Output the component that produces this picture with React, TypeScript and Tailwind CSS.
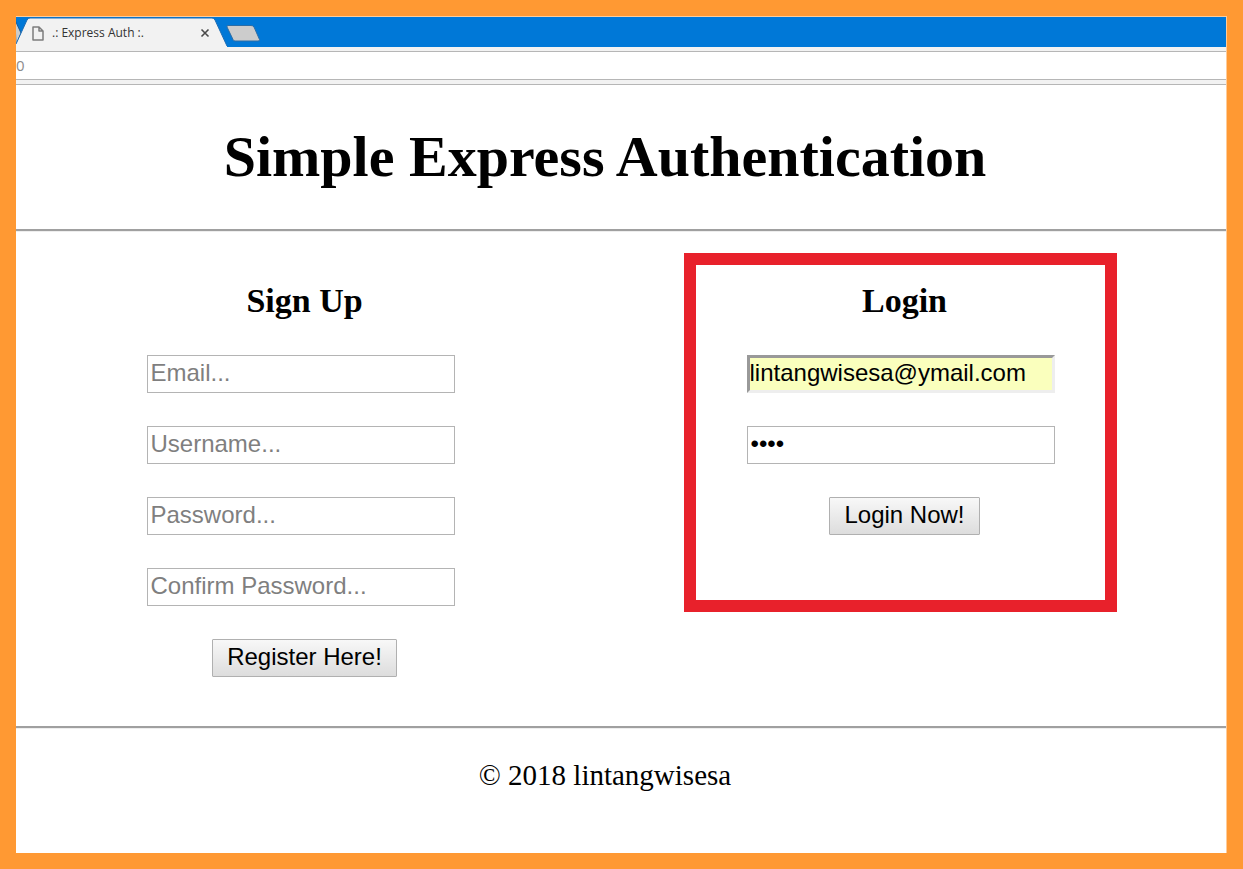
import { useState } from "react";

const serif = "font-['Liberation_Serif','Times_New_Roman',serif]";
const controlBase =
  "h-[38px] text-[24px] leading-[30px] font-['Liberation_Sans',Arial,sans-serif]";
const fieldClass = `${controlBase} w-[308px] border border-[#b4b4b4] bg-white px-[3px] pb-0.5 text-black placeholder:text-[#7f7f7f] placeholder:opacity-100 outline-none`;
const filledClass = `${controlBase} w-[308px] border-[3px] border-t-[#999999] border-l-[#999999] border-r-[#eeeeee] border-b-[#eeeeee] bg-[#faffbd] pb-0.5 text-black outline-none`;
const buttonClass = `${controlBase} self-center rounded-[1px] border border-[#b0b0b0] bg-linear-to-b from-[#f8f8f8] to-[#dddddd] px-[14px] pb-0.5 text-black`;
const panelClass =
  "flex w-[433px] flex-col border-[12px] pt-4 pr-[42px] pl-[51px]";

function Rule() {
  return (
    <hr className="h-[3px] border-0 border-t-2 border-b border-t-[#a0a0a0] border-b-[#eeeeee]" />
  );
}

function TabStrip() {
  return (
    <div className="relative flex h-[30px] items-center bg-[#0078d7]">
      <svg
        className="absolute top-0 left-0"
        width="250"
        height="30"
        viewBox="0 0 250 30"
        aria-hidden="true"
      >
        <path d="M-1 3 L5 16 L0 29 Z" fill="#cccccc" stroke="#1d5c96" />
        <path
          d="M0 30 V27 L11 3 Q12 1 14 1 H196 Q198 1 199 3 L211 29 V30 Z"
          fill="#f2f2f2"
        />
        <path
          d="M0 27 L11 3 Q12 1 14 1 H196 Q198 1 199 3 L211 29"
          fill="none"
          stroke="#1d6db5"
        />
        <path
          d="M212 8.5 H235 Q237 8.5 238 10 L243.500 22.500 Q244 24 242 24 H219 Q217.500 24 217 22.500 L211 10 Q210.500 8.500 212 8.500 Z"
          fill="#cccccc"
          stroke="#2d6da5"
        />
      </svg>
      <div className="relative flex w-[195px] items-center pt-0.5 pl-4">
        <svg width="12" height="15" viewBox="0 0 12 15" fill="none" aria-hidden="true">
          <path
            d="M1 1 H7 L11 5 V14 H1 Z M7 1 V5 H11"
            stroke="#7d7d7d"
            strokeWidth="1.500"
            strokeLinejoin="round"
          />
        </svg>
        <span className="ml-2 flex-1 font-['Open_Sans','Noto_Sans',sans-serif] text-[12px] leading-4 text-[#333333]">
          .: Express Auth :.
        </span>
        <button type="button" aria-label="Close tab" className="p-px">
          <svg width="10" height="10" viewBox="0 0 10 10" aria-hidden="true">
            <path d="M1.500 1.500 L8.500 8.500 M8.500 1.500 L1.500 8.500" stroke="#4a4a4a" strokeWidth="1.600" />
          </svg>
        </button>
      </div>
    </div>
  );
}

export default function App() {
  const [address, setAddress] = useState("0");
  const [email, setEmail] = useState("lintangwisesa@ymail.com");
  const [password, setPassword] = useState("1234");

  return (
    <div className="flex min-h-screen flex-col bg-[#ff9933] p-4">
      <div className="flex flex-1 flex-col border-t border-r border-[#ffcc99] bg-white">
        <TabStrip />
        <div className="bg-[#f2f2f2] pt-1 pb-1">
          <input
            aria-label="Address"
            value={address}
            onChange={(e) => setAddress(e.target.value)}
            className="block h-[29px] w-full border-y border-[#b6b6b6] bg-white pb-0.5 font-['Open_Sans','Noto_Sans',sans-serif] text-[15px] text-[#8c8c8c] outline-none"
          />
        </div>
        <div className={`flex-1 border-t border-[#b6b6b6] text-black ${serif}`}>
          <header className="pt-10 pr-8 pb-10">
            <h1 className="text-center text-[58px] leading-[64px] font-bold">
              Simple Express Authentication
            </h1>
          </header>
          <Rule />
          <main className="flex justify-center gap-[167px] pt-[21px] pr-[42px] pb-[37px]">
            <form
              className={`${panelClass} border-transparent`}
              onSubmit={(e) => e.preventDefault()}
            >
              <h3 className="mb-[34px] text-center text-[34px] leading-10 font-bold">
                Sign Up
              </h3>
              <div className="flex flex-col gap-[33px]">
                <input type="email" aria-label="Email" placeholder="Email..." className={fieldClass} />
                <input type="text" aria-label="Username" placeholder="Username..." className={fieldClass} />
                <input type="password" aria-label="Password" placeholder="Password..." className={fieldClass} />
                <input
                  type="password"
                  aria-label="Confirm password"
                  placeholder="Confirm Password..."
                  className={fieldClass}
                />
                <button type="submit" className={buttonClass}>
                  Register Here!
                </button>
              </div>
            </form>
            <form
              className={`${panelClass} self-start border-[#e8212b] pb-[65px]`}
              onSubmit={(e) => e.preventDefault()}
            >
              <h3 className="mb-[34px] text-center text-[34px] leading-10 font-bold">
                Login
              </h3>
              <div className="flex flex-col gap-[33px]">
                <input
                  type="email"
                  aria-label="Login email"
                  value={email}
                  onChange={(e) => setEmail(e.target.value)}
                  className={filledClass}
                />
                <input
                  type="password"
                  aria-label="Login password"
                  value={password}
                  onChange={(e) => setPassword(e.target.value)}
                  className={fieldClass}
                />
                <button type="submit" className={buttonClass}>
                  Login Now!
                </button>
              </div>
            </form>
          </main>
          <Rule />
          <footer className="pt-[26px] pr-8 pb-7">
            <p className="text-center text-[29px] leading-10">© 2018 lintangwisesa</p>
          </footer>
        </div>
      </div>
    </div>
  );
}
